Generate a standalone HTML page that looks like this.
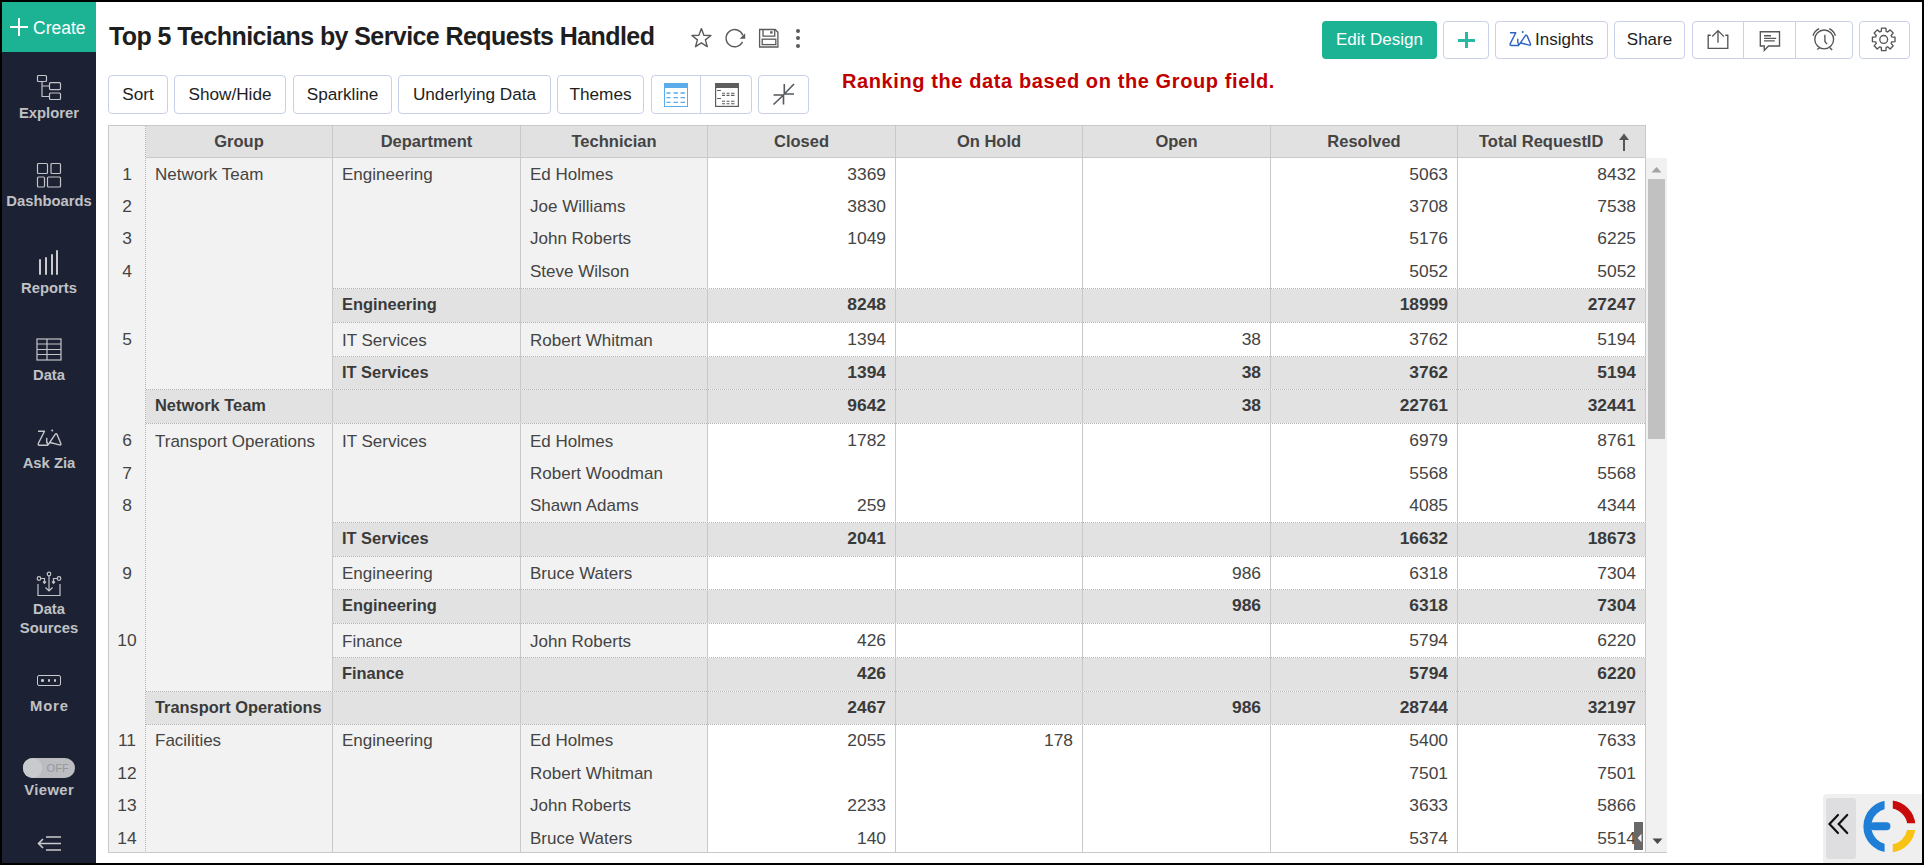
<!DOCTYPE html><html><head><meta charset="utf-8"><title>Zoho Analytics</title><style>
*{margin:0;padding:0;box-sizing:border-box}
html,body{width:1924px;height:865px;overflow:hidden;background:#fff;font-family:"Liberation Sans", sans-serif}
.a{position:absolute}
.t{position:absolute;white-space:nowrap}
.btn{position:absolute;border:1px solid #c9d0e8;border-radius:4px;background:#fff}
.sb{position:absolute;left:2px;width:94px;text-align:center;color:#c0c1c5;font-weight:bold;font-size:14.8px;line-height:19px}
.c{position:absolute;white-space:nowrap;overflow:hidden;font-size:17px;color:#444444}
.num{font-size:17.4px}
.b{font-weight:bold}
.lb{font-size:16.4px}
</style></head><body>
<div class="a" style="left:0;top:0;width:96px;height:865px;background:#1c2133"></div>
<div class="a" style="left:2px;top:2px;width:94px;height:50px;background:#1bb394"></div>
<div class="a" style="left:10px;top:26px;width:18px;height:2px;background:#fff"></div>
<div class="a" style="left:18px;top:18px;width:2px;height:18px;background:#fff"></div>
<div class="t" style="left:33px;top:17px;font-size:17.5px;line-height:22px;color:#fff">Create</div>
<svg class="a" style="left:36px;top:74px" width="27" height="28" viewBox="0 0 27 28" stroke="#c4c5c9" fill="none" stroke-width="1.2">
<rect x="1.5" y="1.5" width="9" height="6" rx="1"/><path d="M3.5 1.5v-0"/>
<path d="M6 7.5v15h7.5M6 12h7.5"/>
<rect x="13.5" y="8.7" width="11" height="6.9" rx="1"/>
<rect x="13.5" y="19" width="11" height="6.5" rx="1"/>
</svg>
<div class="sb" style="top:104px">Explorer</div>
<svg class="a" style="left:36px;top:162px" width="27" height="27" viewBox="0 0 27 27" stroke="#c4c5c9" fill="none" stroke-width="1.2">
<rect x="1.5" y="1.5" width="10" height="10" rx="1"/>
<rect x="15" y="1.5" width="9.5" height="10" rx="1"/>
<rect x="1.5" y="15" width="7" height="10" rx="1"/>
<rect x="11.5" y="15" width="13" height="10" rx="1"/>
</svg>
<div class="sb" style="top:192px">Dashboards</div>
<div class="a" style="left:39.2px;top:259.4px;width:2px;height:15.3px;background:#c9cacd;border-radius:1px"></div>
<div class="a" style="left:44.9px;top:257.3px;width:2px;height:17.4px;background:#c9cacd;border-radius:1px"></div>
<div class="a" style="left:50.5px;top:253.9px;width:2px;height:20.8px;background:#c9cacd;border-radius:1px"></div>
<div class="a" style="left:55.8px;top:250.0px;width:2px;height:24.7px;background:#c9cacd;border-radius:1px"></div>
<div class="sb" style="top:279px">Reports</div>
<svg class="a" style="left:36px;top:338px" width="26" height="23" viewBox="0 0 26 23" stroke="#c4c5c9" fill="none" stroke-width="1.2">
<rect x="1" y="1" width="24" height="21"/>
<path d="M11 1v21M1 6h24M1 11.5h24M1 16.5h24"/>
</svg>
<div class="sb" style="top:366px">Data</div>
<svg class="a" style="left:37px;top:427px" width="25" height="21" viewBox="0 0 25 21" stroke="#c6c7cb" fill="none" stroke-width="1.4" stroke-linejoin="round">
<path d="M1 4.2h6.5L1.4 16.2q-0.8 2.1 1.4 2.1h8.3"/>
<path d="M9.8 10.8q-0.9 3.5 1.2 7"/><circle cx="15.2" cy="3.4" r="1" fill="#c6c7cb" stroke="none"/>
<path d="M11 18L18 7.6q1.3-1.8 2.3 0.3l3.5 8.6q0.6 1.8-1.3 1.4l-9.5-2.4"/>
</svg>
<div class="sb" style="top:454px">Ask Zia</div>
<svg class="a" style="left:36px;top:571px" width="26" height="26" viewBox="0 0 26 26" stroke="#c4c5c9" fill="none" stroke-width="1.2">
<path d="M2 13v11.5h22V13"/>
<circle cx="13" cy="3" r="1.8"/><path d="M13 4.8V20M9.5 16.5L13 20l3.5-3.5"/>
<circle cx="3" cy="7.5" r="1.8"/><path d="M4.8 7.5H8.5v4.5M7 10.5l1.5 1.8 1.5-1.8"/>
<circle cx="23" cy="7.5" r="1.8"/><path d="M21.2 7.5H17.5v4.5M16 10.5l1.5 1.8 1.5-1.8"/>
</svg>
<div class="sb" style="top:600px">Data</div>
<div class="sb" style="top:619px">Sources</div>
<div class="a" style="left:37px;top:675px;width:24px;height:11px;border:1.5px solid #c9cacd;border-radius:2px"></div>
<div class="a" style="left:41.2px;top:679.2px;width:2.6px;height:2.6px;border-radius:50%;background:#c9cacd"></div>
<div class="a" style="left:47.7px;top:679.2px;width:2.6px;height:2.6px;border-radius:50%;background:#c9cacd"></div>
<div class="a" style="left:53.6px;top:679.2px;width:2.6px;height:2.6px;border-radius:50%;background:#c9cacd"></div>
<div class="sb" style="top:697px;letter-spacing:0.8px;text-indent:0.8px">More</div>
<div class="a" style="left:23px;top:758px;width:52px;height:20px;border-radius:10px;background:#bcbdc1"></div>
<div class="a" style="left:23px;top:758px;width:19px;height:20px;border-radius:10px;background:#c9cacd"></div>
<div class="t" style="left:46.5px;top:759px;font-size:11.2px;line-height:18px;color:#97989c">OFF</div>
<div class="sb" style="top:781px;letter-spacing:0.4px;text-indent:0.4px">Viewer</div>
<svg class="a" style="left:36px;top:835px" width="27" height="18" viewBox="0 0 27 18" stroke="#c9cacd" fill="none" stroke-width="1.6">
<path d="M10 2h15M2.5 8.5h22.5M10 15h15M7 4L2.5 8.5 7 13"/></svg>
<div class="t" style="left:109px;top:21px;font-size:25px;line-height:30px;font-weight:bold;color:#1e1e1e;letter-spacing:-0.58px">Top 5 Technicians by Service Requests Handled</div>
<svg class="a" style="left:689px;top:26px" width="25" height="24" stroke="#5a5a5a" fill="none" stroke-width="1.4"><polygon stroke-linejoin="round" points="12.40,2.60 14.87,9.20 21.91,9.51 16.39,13.90 18.28,20.69 12.40,16.80 6.52,20.69 8.41,13.90 2.89,9.51 9.93,9.20"/></svg>
<svg class="a" style="left:724px;top:27px" width="24" height="22" stroke="#5a5a5a" fill="none" stroke-width="1.4"><path d="M18.8 8.3A8.6 8.6 0 1 0 18.5 14.8"/><path d="M21.2 6.2v5.6h-5.6z" fill="#5a5a5a" stroke="none"/></svg>
<svg class="a" style="left:758px;top:28px" width="22" height="21" stroke="#5a5a5a" fill="none" stroke-width="1.3"><path d="M1.6 1.5h15.5l2.8 2.8v14.7H1.6z"/><path d="M5 1.5v6.6h11.7V1.5"/><rect x="4.2" y="11.2" width="13.6" height="5.4"/><rect x="12.2" y="3.2" width="2.4" height="2.4" fill="#5a5a5a" stroke="none"/></svg>
<div class="a" style="left:796px;top:28.7px;width:4px;height:4px;border-radius:50%;background:#5a5a5a"></div>
<div class="a" style="left:796px;top:36.2px;width:4px;height:4px;border-radius:50%;background:#5a5a5a"></div>
<div class="a" style="left:796px;top:43.7px;width:4px;height:4px;border-radius:50%;background:#5a5a5a"></div>
<div class="a" style="left:1322px;top:21px;width:115px;height:38px;border-radius:4px;background:#1bb394"></div>
<div class="t" style="left:1322px;top:21px;width:115px;text-align:center;font-size:17px;line-height:38px;color:#fff">Edit Design</div>
<div class="btn" style="left:1443px;top:21px;width:46px;height:38px"></div>
<div class="a" style="left:1458px;top:39.2px;width:17px;height:2.4px;background:#27b9a1"></div>
<div class="a" style="left:1465.3px;top:32.2px;width:2.4px;height:16px;background:#27b9a1"></div>
<div class="btn" style="left:1495px;top:21px;width:113px;height:38px"></div>
<svg class="a" style="left:1509.1px;top:29.4px" width="22.5" height="18.9" viewBox="0 0 25 21" stroke="#2f63c4" fill="none" stroke-width="1.6" stroke-linejoin="round"><path d="M1 4.2h6.5L1.4 16.2q-0.8 2.1 1.4 2.1h8.3"/><path d="M9.8 10.8q-0.9 3.5 1.2 7"/><circle cx="15.2" cy="3.4" r="1.1" fill="#2f63c4" stroke="none"/><path d="M11 18L18 7.6q1.3-1.8 2.3 0.3l3.5 8.6q0.6 1.8-1.3 1.4l-9.5-2.4"/></svg>
<div class="t" style="left:1535px;top:21px;font-size:17px;line-height:38px;color:#1e1e1e">Insights</div>
<div class="btn" style="left:1614px;top:21px;width:71px;height:38px"></div>
<div class="t" style="left:1614px;top:21px;width:71px;text-align:center;font-size:17px;line-height:38px;color:#1e1e1e">Share</div>
<div class="btn" style="left:1692px;top:21px;width:161px;height:38px"></div>
<div class="a" style="left:1743px;top:22px;width:1px;height:36px;background:#c9d0e8"></div>
<div class="a" style="left:1795px;top:22px;width:1px;height:36px;background:#c9d0e8"></div>
<div class="btn" style="left:1859px;top:21px;width:51px;height:38px"></div>
<svg class="a" style="left:1706px;top:29px" width="24" height="22" stroke="#555" fill="none" stroke-width="1.35"><path d="M4.8 6.2H2.2v13.1h19.6V6.2h-2.5"/><path d="M12 2v11.7M6.2 7.4L12 1.6l5.9 6"/></svg>
<svg class="a" style="left:1759px;top:30px" width="23" height="22" stroke="#555" fill="none" stroke-width="1.35"><path d="M1.3 1.7h19.2V16H9.5l-4.2 4.4V16h-4z"/><path d="M5 5.7h7M5 8.3h12.2M5 10.8h10.8"/></svg>
<svg class="a" style="left:1811px;top:27px" width="27" height="25" stroke="#555" fill="none" stroke-width="1.35"><circle cx="13.2" cy="12.4" r="9.4"/><path d="M13.9 7.7v6.8l2.1 2.6"/><path d="M1.98 8.75A11.8 11.8 0 0 1 8.21 1.71M18.19 1.71A11.8 11.8 0 0 1 24.42 8.75M6.2 22.5l2.9-2M18.6 20.5l2.6 2.6"/></svg>
<svg class="a" style="left:1871px;top:27px" width="25" height="25" stroke="#555" fill="none" stroke-width="1.35"><polygon points="20.72,9.92 23.99,10.23 23.99,14.57 20.72,14.88 20.13,16.32 22.22,18.85 19.15,21.92 16.62,19.83 15.18,20.42 14.87,23.69 10.53,23.69 10.22,20.42 8.78,19.83 6.25,21.92 3.18,18.85 5.27,16.32 4.68,14.88 1.41,14.57 1.41,10.23 4.68,9.92 5.27,8.48 3.18,5.95 6.25,2.88 8.78,4.97 10.22,4.38 10.53,1.11 14.87,1.11 15.18,4.38 16.62,4.97 19.15,2.88 22.22,5.95 20.13,8.48" stroke-linejoin="round"/><circle cx="12.7" cy="12.4" r="3.9"/></svg>
<div class="btn" style="left:108px;top:75px;width:60px;height:39px"></div>
<div class="t" style="left:108px;top:75px;width:60px;text-align:center;font-size:17.2px;line-height:39px;color:#1e1e1e">Sort</div>
<div class="btn" style="left:174px;top:75px;width:112px;height:39px"></div>
<div class="t" style="left:174px;top:75px;width:112px;text-align:center;font-size:17.2px;line-height:39px;color:#1e1e1e">Show/Hide</div>
<div class="btn" style="left:293px;top:75px;width:99px;height:39px"></div>
<div class="t" style="left:293px;top:75px;width:99px;text-align:center;font-size:17.2px;line-height:39px;color:#1e1e1e">Sparkline</div>
<div class="btn" style="left:398px;top:75px;width:153px;height:39px"></div>
<div class="t" style="left:398px;top:75px;width:153px;text-align:center;font-size:17.2px;line-height:39px;color:#1e1e1e">Underlying Data</div>
<div class="btn" style="left:557px;top:75px;width:87px;height:39px"></div>
<div class="t" style="left:557px;top:75px;width:87px;text-align:center;font-size:17.2px;line-height:39px;color:#1e1e1e">Themes</div>
<div class="btn" style="left:651px;top:75px;width:101px;height:39px"></div>
<div class="a" style="left:700px;top:76px;width:1px;height:37px;background:#c9d0e8"></div>
<div class="btn" style="left:758px;top:75px;width:51px;height:39px"></div>
<svg class="a" style="left:664px;top:83px" width="24" height="24" viewBox="0 0 24 24"><rect x="0.5" y="0.5" width="23" height="23" fill="#fff" stroke="#5aacea" stroke-width="1"/><rect x="0" y="0" width="24" height="5" fill="#5aacea"/><g stroke="#5aacea" stroke-width="1.3"><path d="M2.5 10h4M9.5 10h4.5M16.5 10h4.5M2.5 14.6h4M9.5 14.6h4.5M16.5 14.6h4.5M2.5 19.3h4M9.5 19.3h4.5M16.5 19.3h4.5"/></g></svg>
<svg class="a" style="left:715px;top:83px" width="24" height="24" viewBox="0 0 24 24"><rect x="0.6" y="0.6" width="22.8" height="22.8" fill="#fff" stroke="#5d5d5d" stroke-width="1.2"/><rect x="0" y="0" width="24" height="5" fill="#5d5d5d"/><g stroke="#5d5d5d" stroke-width="1.1"><path d="M2 7.5h4M2 15.5h4M7 10.3h3M11.5 10.3h3M16 10.3h3.5M7 12.4h3M11.5 12.4h3M16 12.4h3.5M7 18.2h3M11.5 18.2h3M16 18.2h3.5M7 20.7h3M11.5 20.7h3M16 20.7h3.5"/></g></svg>
<svg class="a" style="left:770px;top:81px" width="28" height="27" viewBox="0 0 28 27" stroke="#55585e" fill="none" stroke-width="1.6"><path d="M3.5 23.5L13.5 14M3.5 14h10v9.5M24 3L14.3 13M14.3 3v10H24"/></svg>
<div class="t" style="left:842px;top:69px;font-size:20px;line-height:24px;font-weight:bold;color:#c00000;letter-spacing:0.6px">Ranking the data based on the Group field.</div>
<div class="a" style="left:109px;top:126px;width:598px;height:726px;background:#f2f2f2;"></div>
<div class="a" style="left:708px;top:158px;width:937px;height:694px;background:#fff;"></div>
<div class="a" style="left:146px;top:126px;width:1499px;height:31px;background:#e1e1e1;"></div>
<div class="a" style="left:333px;top:289px;width:1312px;height:33px;background:#e2e2e2;"></div>
<div class="a" style="left:333px;top:357px;width:1312px;height:32px;background:#e2e2e2;"></div>
<div class="a" style="left:146px;top:390px;width:1499px;height:33px;background:#e2e2e2;"></div>
<div class="a" style="left:333px;top:523px;width:1312px;height:33px;background:#e2e2e2;"></div>
<div class="a" style="left:333px;top:590px;width:1312px;height:33px;background:#e2e2e2;"></div>
<div class="a" style="left:333px;top:658px;width:1312px;height:33px;background:#e2e2e2;"></div>
<div class="a" style="left:146px;top:692px;width:1499px;height:32px;background:#e2e2e2;"></div>
<div class="a" style="left:333px;top:288px;width:1312px;height:1px;background:repeating-linear-gradient(to right,#b3b3b3 0 1px,transparent 1px 2px)"></div>
<div class="a" style="left:333px;top:322px;width:1312px;height:1px;background:repeating-linear-gradient(to right,#b3b3b3 0 1px,transparent 1px 2px)"></div>
<div class="a" style="left:333px;top:356px;width:1312px;height:1px;background:repeating-linear-gradient(to right,#b3b3b3 0 1px,transparent 1px 2px)"></div>
<div class="a" style="left:146px;top:389px;width:1499px;height:1px;background:repeating-linear-gradient(to right,#b3b3b3 0 1px,transparent 1px 2px)"></div>
<div class="a" style="left:146px;top:423px;width:1499px;height:1px;background:repeating-linear-gradient(to right,#b3b3b3 0 1px,transparent 1px 2px)"></div>
<div class="a" style="left:333px;top:522px;width:1312px;height:1px;background:repeating-linear-gradient(to right,#b3b3b3 0 1px,transparent 1px 2px)"></div>
<div class="a" style="left:333px;top:556px;width:1312px;height:1px;background:repeating-linear-gradient(to right,#b3b3b3 0 1px,transparent 1px 2px)"></div>
<div class="a" style="left:333px;top:589px;width:1312px;height:1px;background:repeating-linear-gradient(to right,#b3b3b3 0 1px,transparent 1px 2px)"></div>
<div class="a" style="left:333px;top:623px;width:1312px;height:1px;background:repeating-linear-gradient(to right,#b3b3b3 0 1px,transparent 1px 2px)"></div>
<div class="a" style="left:333px;top:657px;width:1312px;height:1px;background:repeating-linear-gradient(to right,#b3b3b3 0 1px,transparent 1px 2px)"></div>
<div class="a" style="left:146px;top:691px;width:1499px;height:1px;background:repeating-linear-gradient(to right,#b3b3b3 0 1px,transparent 1px 2px)"></div>
<div class="a" style="left:146px;top:724px;width:1499px;height:1px;background:repeating-linear-gradient(to right,#b3b3b3 0 1px,transparent 1px 2px)"></div>
<div class="a" style="left:332px;top:126px;width:1px;height:726px;background:#c9c9c9;"></div>
<div class="a" style="left:520px;top:126px;width:1px;height:726px;background:#c9c9c9;"></div>
<div class="a" style="left:707px;top:126px;width:1px;height:726px;background:#c9c9c9;"></div>
<div class="a" style="left:895px;top:126px;width:1px;height:726px;background:#c9c9c9;"></div>
<div class="a" style="left:1082px;top:126px;width:1px;height:726px;background:#c9c9c9;"></div>
<div class="a" style="left:1270px;top:126px;width:1px;height:726px;background:#c9c9c9;"></div>
<div class="a" style="left:1457px;top:126px;width:1px;height:726px;background:#c9c9c9;"></div>
<div class="a" style="left:145px;top:126px;width:1px;height:726px;background:repeating-linear-gradient(to bottom,#b3b3b3 0 1px,transparent 1px 2px)"></div>
<div class="a" style="left:108px;top:125px;width:1538px;height:1px;background:#c9c9c9;"></div>
<div class="a" style="left:108px;top:125px;width:1px;height:728px;background:#c9c9c9;"></div>
<div class="a" style="left:1645px;top:125px;width:1px;height:727px;background:#c9c9c9;"></div>
<div class="a" style="left:146px;top:157px;width:1499px;height:1px;background:#c9c9c9;"></div>
<div class="a" style="left:108px;top:852px;width:1559px;height:1px;background:#c9c9c9;"></div>
<div class="c b" style="left:146px;top:126px;width:186px;text-align:center;font-size:16.5px;line-height:31px;color:#444">Group</div>
<div class="c b" style="left:333px;top:126px;width:187px;text-align:center;font-size:16.5px;line-height:31px;color:#444">Department</div>
<div class="c b" style="left:521px;top:126px;width:186px;text-align:center;font-size:16.5px;line-height:31px;color:#444">Technician</div>
<div class="c b" style="left:708px;top:126px;width:187px;text-align:center;font-size:16.5px;line-height:31px;color:#444">Closed</div>
<div class="c b" style="left:896px;top:126px;width:186px;text-align:center;font-size:16.5px;line-height:31px;color:#444">On Hold</div>
<div class="c b" style="left:1083px;top:126px;width:187px;text-align:center;font-size:16.5px;line-height:31px;color:#444">Open</div>
<div class="c b" style="left:1271px;top:126px;width:186px;text-align:center;font-size:16.5px;line-height:31px;color:#444">Resolved</div>
<div class="c b" style="left:1479px;top:126px;font-size:16.5px;line-height:31px;color:#444">Total RequestID</div>
<svg class="a" style="left:1618px;top:132px" width="12" height="20" viewBox="0 0 12 20" fill="#555"><path d="M6 1.5L1 8h4v11h2V8h4z"/></svg>
<div class="c num" style="left:109px;top:159.0px;width:36px;text-align:center;line-height:30.7px;color:#444444">1</div>
<div class="c" style="left:155px;top:160.0px;width:177px;line-height:30.7px;color:#444444">Network Team</div>
<div class="c" style="left:342px;top:160.0px;width:178px;line-height:30.7px;color:#444444">Engineering</div>
<div class="c" style="left:530px;top:160.0px;width:177px;line-height:30.7px;color:#444444">Ed Holmes</div>
<div class="c num" style="left:708px;top:159.0px;width:178px;text-align:right;line-height:30.7px;color:#444444">3369</div>
<div class="c num" style="left:1271px;top:159.0px;width:177px;text-align:right;line-height:30.7px;color:#444444">5063</div>
<div class="c num" style="left:1458px;top:159.0px;width:178px;text-align:right;line-height:30.7px;color:#444444">8432</div>
<div class="c num" style="left:109px;top:189.7px;width:36px;text-align:center;line-height:32.6px;color:#444444">2</div>
<div class="c" style="left:530px;top:190.7px;width:177px;line-height:32.6px;color:#444444">Joe Williams</div>
<div class="c num" style="left:708px;top:189.7px;width:178px;text-align:right;line-height:32.6px;color:#444444">3830</div>
<div class="c num" style="left:1271px;top:189.7px;width:177px;text-align:right;line-height:32.6px;color:#444444">3708</div>
<div class="c num" style="left:1458px;top:189.7px;width:178px;text-align:right;line-height:32.6px;color:#444444">7538</div>
<div class="c num" style="left:109px;top:222.3px;width:36px;text-align:center;line-height:32.7px;color:#444444">3</div>
<div class="c" style="left:530px;top:223.3px;width:177px;line-height:32.7px;color:#444444">John Roberts</div>
<div class="c num" style="left:708px;top:222.3px;width:178px;text-align:right;line-height:32.7px;color:#444444">1049</div>
<div class="c num" style="left:1271px;top:222.3px;width:177px;text-align:right;line-height:32.7px;color:#444444">5176</div>
<div class="c num" style="left:1458px;top:222.3px;width:178px;text-align:right;line-height:32.7px;color:#444444">6225</div>
<div class="c num" style="left:109px;top:255.0px;width:36px;text-align:center;line-height:32.0px;color:#444444">4</div>
<div class="c" style="left:530px;top:256.0px;width:177px;line-height:32.0px;color:#444444">Steve Wilson</div>
<div class="c num" style="left:1271px;top:255.0px;width:177px;text-align:right;line-height:32.0px;color:#444444">5052</div>
<div class="c num" style="left:1458px;top:255.0px;width:178px;text-align:right;line-height:32.0px;color:#444444">5052</div>
<div class="c b lb" style="left:342px;top:288.0px;width:178px;line-height:33.0px;color:#3a3a3a">Engineering</div>
<div class="c b num" style="left:708px;top:288.0px;width:178px;text-align:right;line-height:33.0px;color:#3a3a3a">8248</div>
<div class="c b num" style="left:1271px;top:288.0px;width:177px;text-align:right;line-height:33.0px;color:#3a3a3a">18999</div>
<div class="c b num" style="left:1458px;top:288.0px;width:178px;text-align:right;line-height:33.0px;color:#3a3a3a">27247</div>
<div class="c num" style="left:109px;top:323.0px;width:36px;text-align:center;line-height:33.0px;color:#444444">5</div>
<div class="c" style="left:342px;top:324.0px;width:178px;line-height:33.0px;color:#444444">IT Services</div>
<div class="c" style="left:530px;top:324.0px;width:177px;line-height:33.0px;color:#444444">Robert Whitman</div>
<div class="c num" style="left:708px;top:323.0px;width:178px;text-align:right;line-height:33.0px;color:#444444">1394</div>
<div class="c num" style="left:1083px;top:323.0px;width:178px;text-align:right;line-height:33.0px;color:#444444">38</div>
<div class="c num" style="left:1271px;top:323.0px;width:177px;text-align:right;line-height:33.0px;color:#444444">3762</div>
<div class="c num" style="left:1458px;top:323.0px;width:178px;text-align:right;line-height:33.0px;color:#444444">5194</div>
<div class="c b lb" style="left:342px;top:356.0px;width:178px;line-height:32.0px;color:#3a3a3a">IT Services</div>
<div class="c b num" style="left:708px;top:356.0px;width:178px;text-align:right;line-height:32.0px;color:#3a3a3a">1394</div>
<div class="c b num" style="left:1083px;top:356.0px;width:178px;text-align:right;line-height:32.0px;color:#3a3a3a">38</div>
<div class="c b num" style="left:1271px;top:356.0px;width:177px;text-align:right;line-height:32.0px;color:#3a3a3a">3762</div>
<div class="c b num" style="left:1458px;top:356.0px;width:178px;text-align:right;line-height:32.0px;color:#3a3a3a">5194</div>
<div class="c b lb" style="left:155px;top:389.0px;width:177px;line-height:33.0px;color:#3a3a3a">Network Team</div>
<div class="c b num" style="left:708px;top:389.0px;width:178px;text-align:right;line-height:33.0px;color:#3a3a3a">9642</div>
<div class="c b num" style="left:1083px;top:389.0px;width:178px;text-align:right;line-height:33.0px;color:#3a3a3a">38</div>
<div class="c b num" style="left:1271px;top:389.0px;width:177px;text-align:right;line-height:33.0px;color:#3a3a3a">22761</div>
<div class="c b num" style="left:1458px;top:389.0px;width:178px;text-align:right;line-height:33.0px;color:#3a3a3a">32441</div>
<div class="c num" style="left:109px;top:424.0px;width:36px;text-align:center;line-height:33.0px;color:#444444">6</div>
<div class="c" style="left:155px;top:425.0px;width:177px;line-height:33.0px;color:#444444">Transport Operations</div>
<div class="c" style="left:342px;top:425.0px;width:178px;line-height:33.0px;color:#444444">IT Services</div>
<div class="c" style="left:530px;top:425.0px;width:177px;line-height:33.0px;color:#444444">Ed Holmes</div>
<div class="c num" style="left:708px;top:424.0px;width:178px;text-align:right;line-height:33.0px;color:#444444">1782</div>
<div class="c num" style="left:1271px;top:424.0px;width:177px;text-align:right;line-height:33.0px;color:#444444">6979</div>
<div class="c num" style="left:1458px;top:424.0px;width:178px;text-align:right;line-height:33.0px;color:#444444">8761</div>
<div class="c num" style="left:109px;top:456.7px;width:36px;text-align:center;line-height:32.5px;color:#444444">7</div>
<div class="c" style="left:530px;top:457.7px;width:177px;line-height:32.5px;color:#444444">Robert Woodman</div>
<div class="c num" style="left:1271px;top:456.7px;width:177px;text-align:right;line-height:32.5px;color:#444444">5568</div>
<div class="c num" style="left:1458px;top:456.7px;width:178px;text-align:right;line-height:32.5px;color:#444444">5568</div>
<div class="c num" style="left:109px;top:488.5px;width:36px;text-align:center;line-height:32.5px;color:#444444">8</div>
<div class="c" style="left:530px;top:489.5px;width:177px;line-height:32.5px;color:#444444">Shawn Adams</div>
<div class="c num" style="left:708px;top:488.5px;width:178px;text-align:right;line-height:32.5px;color:#444444">259</div>
<div class="c num" style="left:1271px;top:488.5px;width:177px;text-align:right;line-height:32.5px;color:#444444">4085</div>
<div class="c num" style="left:1458px;top:488.5px;width:178px;text-align:right;line-height:32.5px;color:#444444">4344</div>
<div class="c b lb" style="left:342px;top:522.0px;width:178px;line-height:33.0px;color:#3a3a3a">IT Services</div>
<div class="c b num" style="left:708px;top:522.0px;width:178px;text-align:right;line-height:33.0px;color:#3a3a3a">2041</div>
<div class="c b num" style="left:1271px;top:522.0px;width:177px;text-align:right;line-height:33.0px;color:#3a3a3a">16632</div>
<div class="c b num" style="left:1458px;top:522.0px;width:178px;text-align:right;line-height:33.0px;color:#3a3a3a">18673</div>
<div class="c num" style="left:109px;top:557.0px;width:36px;text-align:center;line-height:32.0px;color:#444444">9</div>
<div class="c" style="left:342px;top:558.0px;width:178px;line-height:32.0px;color:#444444">Engineering</div>
<div class="c" style="left:530px;top:558.0px;width:177px;line-height:32.0px;color:#444444">Bruce Waters</div>
<div class="c num" style="left:1083px;top:557.0px;width:178px;text-align:right;line-height:32.0px;color:#444444">986</div>
<div class="c num" style="left:1271px;top:557.0px;width:177px;text-align:right;line-height:32.0px;color:#444444">6318</div>
<div class="c num" style="left:1458px;top:557.0px;width:178px;text-align:right;line-height:32.0px;color:#444444">7304</div>
<div class="c b lb" style="left:342px;top:589.0px;width:178px;line-height:33.0px;color:#3a3a3a">Engineering</div>
<div class="c b num" style="left:1083px;top:589.0px;width:178px;text-align:right;line-height:33.0px;color:#3a3a3a">986</div>
<div class="c b num" style="left:1271px;top:589.0px;width:177px;text-align:right;line-height:33.0px;color:#3a3a3a">6318</div>
<div class="c b num" style="left:1458px;top:589.0px;width:178px;text-align:right;line-height:33.0px;color:#3a3a3a">7304</div>
<div class="c num" style="left:109px;top:624.0px;width:36px;text-align:center;line-height:33.0px;color:#444444">10</div>
<div class="c" style="left:342px;top:625.0px;width:178px;line-height:33.0px;color:#444444">Finance</div>
<div class="c" style="left:530px;top:625.0px;width:177px;line-height:33.0px;color:#444444">John Roberts</div>
<div class="c num" style="left:708px;top:624.0px;width:178px;text-align:right;line-height:33.0px;color:#444444">426</div>
<div class="c num" style="left:1271px;top:624.0px;width:177px;text-align:right;line-height:33.0px;color:#444444">5794</div>
<div class="c num" style="left:1458px;top:624.0px;width:178px;text-align:right;line-height:33.0px;color:#444444">6220</div>
<div class="c b lb" style="left:342px;top:657.0px;width:178px;line-height:33.0px;color:#3a3a3a">Finance</div>
<div class="c b num" style="left:708px;top:657.0px;width:178px;text-align:right;line-height:33.0px;color:#3a3a3a">426</div>
<div class="c b num" style="left:1271px;top:657.0px;width:177px;text-align:right;line-height:33.0px;color:#3a3a3a">5794</div>
<div class="c b num" style="left:1458px;top:657.0px;width:178px;text-align:right;line-height:33.0px;color:#3a3a3a">6220</div>
<div class="c b lb" style="left:155px;top:691.0px;width:177px;line-height:32.0px;color:#3a3a3a">Transport Operations</div>
<div class="c b num" style="left:708px;top:691.0px;width:178px;text-align:right;line-height:32.0px;color:#3a3a3a">2467</div>
<div class="c b num" style="left:1083px;top:691.0px;width:178px;text-align:right;line-height:32.0px;color:#3a3a3a">986</div>
<div class="c b num" style="left:1271px;top:691.0px;width:177px;text-align:right;line-height:32.0px;color:#3a3a3a">28744</div>
<div class="c b num" style="left:1458px;top:691.0px;width:178px;text-align:right;line-height:32.0px;color:#3a3a3a">32197</div>
<div class="c num" style="left:109px;top:724.0px;width:36px;text-align:center;line-height:32.6px;color:#444444">11</div>
<div class="c" style="left:155px;top:725.0px;width:177px;line-height:32.6px;color:#444444">Facilities</div>
<div class="c" style="left:342px;top:725.0px;width:178px;line-height:32.6px;color:#444444">Engineering</div>
<div class="c" style="left:530px;top:725.0px;width:177px;line-height:32.6px;color:#444444">Ed Holmes</div>
<div class="c num" style="left:708px;top:724.0px;width:178px;text-align:right;line-height:32.6px;color:#444444">2055</div>
<div class="c num" style="left:896px;top:724.0px;width:177px;text-align:right;line-height:32.6px;color:#444444">178</div>
<div class="c num" style="left:1271px;top:724.0px;width:177px;text-align:right;line-height:32.6px;color:#444444">5400</div>
<div class="c num" style="left:1458px;top:724.0px;width:178px;text-align:right;line-height:32.6px;color:#444444">7633</div>
<div class="c num" style="left:109px;top:756.6px;width:36px;text-align:center;line-height:32.6px;color:#444444">12</div>
<div class="c" style="left:530px;top:757.6px;width:177px;line-height:32.6px;color:#444444">Robert Whitman</div>
<div class="c num" style="left:1271px;top:756.6px;width:177px;text-align:right;line-height:32.6px;color:#444444">7501</div>
<div class="c num" style="left:1458px;top:756.6px;width:178px;text-align:right;line-height:32.6px;color:#444444">7501</div>
<div class="c num" style="left:109px;top:789.2px;width:36px;text-align:center;line-height:32.6px;color:#444444">13</div>
<div class="c" style="left:530px;top:790.2px;width:177px;line-height:32.6px;color:#444444">John Roberts</div>
<div class="c num" style="left:708px;top:789.2px;width:178px;text-align:right;line-height:32.6px;color:#444444">2233</div>
<div class="c num" style="left:1271px;top:789.2px;width:177px;text-align:right;line-height:32.6px;color:#444444">3633</div>
<div class="c num" style="left:1458px;top:789.2px;width:178px;text-align:right;line-height:32.6px;color:#444444">5866</div>
<div class="c num" style="left:109px;top:821.8px;width:36px;text-align:center;line-height:32.6px;color:#444444">14</div>
<div class="c" style="left:530px;top:822.8px;width:177px;line-height:32.6px;color:#444444">Bruce Waters</div>
<div class="c num" style="left:708px;top:821.8px;width:178px;text-align:right;line-height:32.6px;color:#444444">140</div>
<div class="c num" style="left:1271px;top:821.8px;width:177px;text-align:right;line-height:32.6px;color:#444444">5374</div>
<div class="c num" style="left:1458px;top:821.8px;width:178px;text-align:right;line-height:32.6px;color:#444444">5514</div>
<div class="a" style="left:97px;top:853px;width:1723px;height:10px;background:#fff;"></div>
<div class="a" style="left:1646px;top:158px;width:21px;height:694px;background:#f1f1f1;"></div>
<div class="a" style="left:1648px;top:179px;width:17px;height:260px;background:#c1c1c1;"></div>
<svg class="a" style="left:1651px;top:166px" width="11" height="7"><path d="M0.5 6.5L5.5 1 10.5 6.5z" fill="#a3a3a3"/></svg>
<svg class="a" style="left:1651.5px;top:837.5px" width="11" height="7"><path d="M0.5 0.5h10L5.5 6z" fill="#4a4a4a"/></svg>
<div class="a" style="left:1634px;top:822px;width:9px;height:28px;background:#686868;"></div>
<svg class="a" style="left:1637px;top:833px" width="5" height="10"><path d="M4.5 0.8v8.4L0.7 5z" fill="#f4f4f4"/></svg>
<div class="a" style="left:1823px;top:794px;width:99px;height:70px;background:#efefef;border-radius:4px 0 0 0"></div>
<div class="a" style="left:1826px;top:798px;width:30px;height:61px;background:#dedee0;border-radius:3px"></div>
<svg class="a" style="left:1826px;top:811px" width="26" height="26" stroke="#111" fill="none" stroke-width="2.2" stroke-linecap="round"><path d="M12 4L3.5 13 12 22M21.2 4L12.7 13 21.2 22"/></svg>
<svg class="a" style="left:1860px;top:797px" width="62" height="62" viewBox="0 0 62 62" fill="none" stroke-width="8"><defs><clipPath id="cb"><rect x="0" y="0" width="24.6" height="62"/></clipPath><clipPath id="cr"><rect x="32.8" y="0" width="30" height="26.3"/></clipPath><clipPath id="cy"><rect x="32.8" y="33" width="30" height="30"/></clipPath></defs><circle cx="29.4" cy="29.4" r="22" stroke="#1f7fd6" clip-path="url(#cb)"/><path d="M14 29.2H26.4" stroke="#1f7fd6" stroke-linecap="round"/><circle cx="29.4" cy="29.4" r="22" stroke="#c90a0a" clip-path="url(#cr)"/><circle cx="29.4" cy="29.4" r="22" stroke="#f9c316" clip-path="url(#cy)"/></svg>
<div class="a" style="left:0px;top:0px;width:1924px;height:2px;background:#000;"></div>
<div class="a" style="left:0px;top:863px;width:1924px;height:2px;background:#000;"></div>
<div class="a" style="left:0px;top:0px;width:2px;height:865px;background:#000;"></div>
<div class="a" style="left:1922px;top:0px;width:2px;height:865px;background:#000;"></div>
</body></html>
